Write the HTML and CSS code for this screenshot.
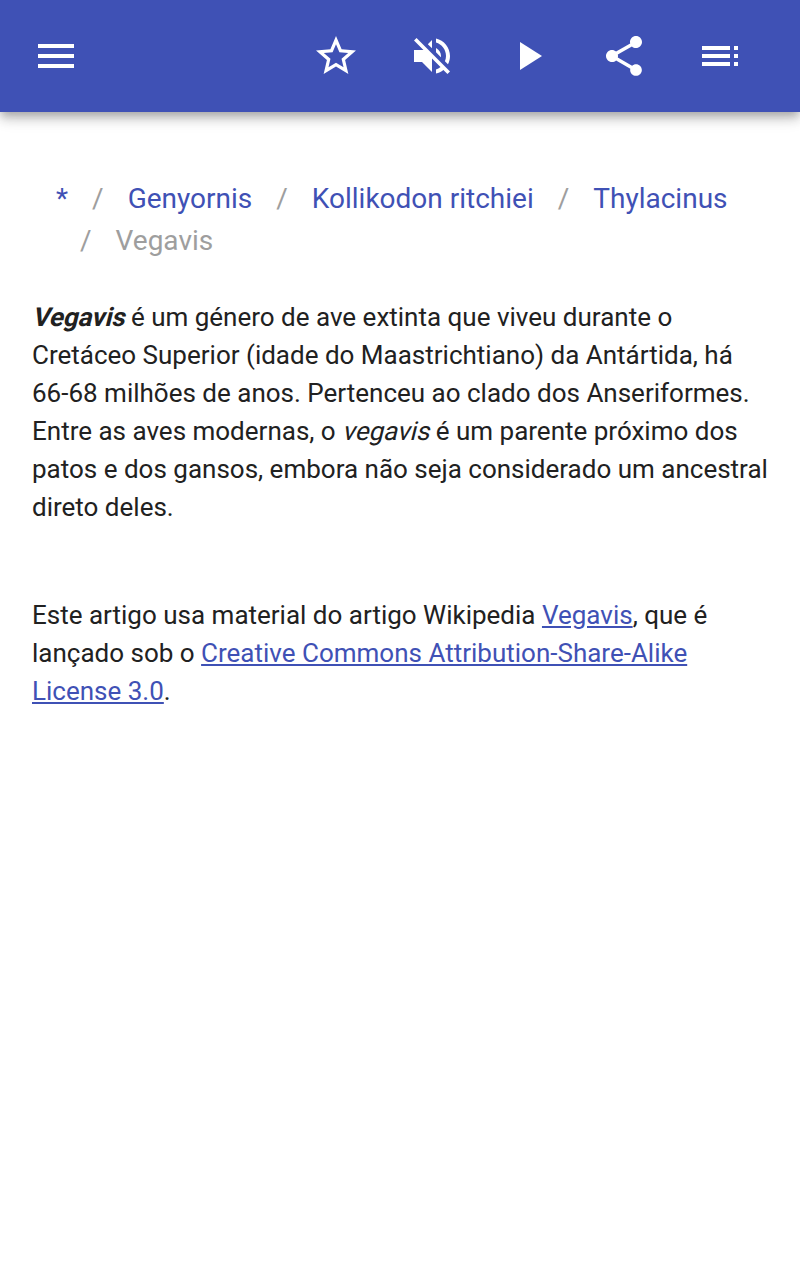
FILE: index.html
```html
<!DOCTYPE html>
<html lang="pt">
<head>
<meta charset="utf-8">
<title>Vegavis</title>
<link rel="stylesheet" href="styles.css">
</head>
<body>
<header class="bar">
  <svg class="icon" viewBox="0 0 24 24"><path d="M3 18h18v-2H3v2zm0-5h18v-2H3v2zm0-7v2h18V6H3z"/></svg>
  <nav class="actions">
    <svg class="icon" viewBox="0 0 24 24"><path d="M22 9.24l-7.19-.62L12 2 9.19 8.63 2 9.24l5.46 4.73L5.82 21 12 17.27 18.18 21l-1.63-7.03L22 9.24zM12 15.4l-3.76 2.27 1-4.28-3.32-2.88 4.38-.38L12 6.1l1.71 4.04 4.38.38-3.32 2.88 1 4.28L12 15.4z"/></svg>
    <svg class="icon" viewBox="0 0 24 24"><path d="M16.5 12c0-1.77-1.02-3.29-2.5-4.03v2.21l2.45 2.45c.03-.2.05-.41.05-.63zm2.5 0c0 .94-.2 1.82-.54 2.64l1.51 1.51C20.63 14.91 21 13.5 21 12c0-4.28-2.99-7.86-7-8.77v2.06c2.89.86 5 3.54 5 6.71zM4.27 3L3 4.27 7.73 9H3v6h4l5 5v-6.73l4.25 4.25c-.67.52-1.42.93-2.25 1.18v2.06c1.38-.31 2.63-.95 3.69-1.81L19.73 21 21 19.73l-9-9L4.27 3zM12 4L9.91 6.09 12 8.18V4z"/></svg>
    <svg class="icon" viewBox="0 0 24 24"><path d="M8 5v14l11-7z"/></svg>
    <svg class="icon" viewBox="0 0 24 24"><path d="M18 16.08c-.76 0-1.44.3-1.96.77L8.91 12.7c.05-.23.09-.46.09-.7s-.04-.47-.09-.7l7.05-4.11c.54.5 1.25.81 2.04.81 1.66 0 3-1.34 3-3s-1.34-3-3-3-3 1.34-3 3c0 .24.04.47.09.7L8.04 9.81C7.5 9.31 6.79 9 6 9c-1.66 0-3 1.34-3 3s1.34 3 3 3c.79 0 1.5-.31 2.04-.81l7.12 4.16c-.05.21-.08.43-.08.65 0 1.61 1.31 2.92 2.92 2.92s2.92-1.31 2.92-2.92-1.31-2.92-2.92-2.92z"/></svg>
    <svg class="icon" viewBox="0 0 24 24"><path d="M3 9h14V7H3v2zm0 4h14v-2H3v2zm0 4h14v-2H3v2zm16 0h2v-2h-2v2zm0-10v2h2V7h-2zm0 6h2v-2h-2v2z"/></svg>
  </nav>
</header>
<main class="content">
  <nav class="crumbs">
    <a class="crumb">*</a><span class="sep">/</span>
    <a class="crumb">Genyornis</a><span class="sep">/</span>
    <a class="crumb">Kollikodon ritchiei</a><span class="sep">/</span>
    <a class="crumb">Thylacinus</a><span class="sep">/</span>
    <span class="current">Vegavis</span>
  </nav>
  <p class="text"><b><i class="slanted">Vegavis</i></b> é um género de ave extinta que viveu durante o<br>Cretáceo Superior (idade do Maastrichtiano) da Antártida, há<br>66-68 milhões de anos. Pertenceu ao clado dos Anseriformes.<br>Entre as aves modernas, o <i class="slanted">vegavis</i> é um parente próximo dos<br>patos e dos gansos, embora não seja considerado um ancestral<br>direto deles.</p>
  <p class="text credit">Este artigo usa material do artigo Wikipedia <a class="link">Vegavis</a>, que é<br>lançado sob o <a class="link">Creative Commons Attribution-Share-Alike<br>License 3.0</a>.</p>
</main>
</body>
</html>
```
FILE: styles.css
```css
body {
  margin: 0;
  min-height: 1280px;
  background: #fff;
  color: #212121;
  font-family: Roboto, sans-serif;
}
.bar {
  display: flex;
  justify-content: space-between;
  align-items: center;
  box-sizing: border-box;
  height: 112px;
  padding: 0 56px 0 32px;
  background: #3f51b5;
  box-shadow: 0 4px 8px -2px rgba(0, 0, 0, .2), 0 8px 10px 0 rgba(0, 0, 0, .14), 0 2px 20px 0 rgba(0, 0, 0, .12);
}
.icon {
  display: block;
  width: 48px;
  height: 48px;
  fill: #fff;
}
.actions {
  display: flex;
  gap: 48px;
}
.content {
  padding: 66px 32px 0;
}
.crumbs {
  display: flex;
  flex-wrap: wrap;
  padding: 0 24px;
  font-size: 28px;
  line-height: 42px;
}
.crumb {
  color: #3f51b5;
}
.sep {
  padding: 0 24px;
  color: #9e9e9e;
}
.current {
  color: #9e9e9e;
}
.text {
  margin: 36px 0 0;
  font-size: 26px;
  line-height: 38px;
  white-space: nowrap;
}
/* Upright glyphs slanted around the baseline */
.slanted {
  display: inline-block;
  font-style: normal;
  transform: skewX(-14deg);
  transform-origin: 0 28px;
}
.credit {
  margin-top: 70px;
}
.link {
  color: #3f51b5;
  text-decoration: underline;
}
```
